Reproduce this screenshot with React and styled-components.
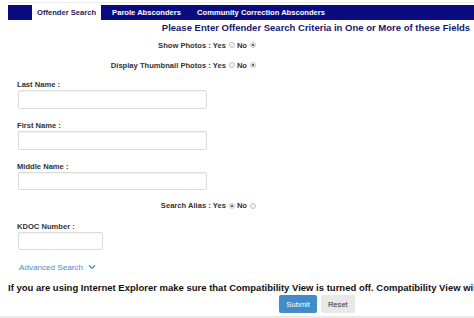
import React from 'react';
import styled, { createGlobalStyle } from 'styled-components';
import { FaChevronDown } from 'react-icons/fa';

const Global = createGlobalStyle`
  html, body {
    margin: 0;
    padding: 0;
    background: #fff;
    overflow: hidden;
  }
  body {
    font-family: "Liberation Sans", Arial, sans-serif;
    color: #333;
  }
`;

const Page = styled.div`
  width: 900px;
  padding-left: 8px;
`;

const TopRule = styled.div`
  margin-top: 2px;
  height: 1px;
  background: #ececec;
`;

const TabBar = styled.nav`
  margin-top: 2px;
  height: 15px;
  background: #0b0b80;
  display: flex;
  align-items: stretch;
  padding-left: 24px;
  gap: 6px;
`;

const Tab = styled.div`
  display: flex;
  align-items: center;
  padding: 0 5px;
  font-size: 7.6px;
  font-weight: bold;
  white-space: nowrap;
  background: ${p => (p.$active ? '#fff' : 'transparent')};
  color: ${p => (p.$active ? '#1c1c5a' : '#fff')};
`;

const Content = styled.div`
  width: 616px;
`;

const Heading = styled.h2`
  margin: 1px 0 0;
  height: 14px;
  line-height: 14px;
  font-size: 9.5px;
  font-weight: bold;
  color: #17176a;
  text-align: center;
`;

const RadioRow = styled.div`
  width: 250px;
  height: 12px;
  margin-top: ${p => p.$top || 0}px;
  display: flex;
  justify-content: flex-end;
  align-items: center;
  font-size: 7.6px;
  font-weight: bold;
  color: #333;
  white-space: nowrap;
`;

const Radio = styled.span`
  display: inline-block;
  box-sizing: border-box;
  width: 6px;
  height: 6px;
  margin: 0 2px 0 3px;
  border-radius: 50%;
  border: 1px solid #c4c4c4;
  background: ${p => (p.$checked ? 'radial-gradient(circle, #666 0 1.3px, #f2f2f2 1.6px)' : '#f2f2f2')};
`;

const Field = styled.div`
  padding-left: 9px;
  margin-top: ${p => p.$top || 0}px;
`;

const Label = styled.div`
  height: 11px;
  line-height: 11px;
  font-size: 7.6px;
  font-weight: bold;
  color: #333;
`;

const Input = styled.input`
  display: block;
  box-sizing: border-box;
  margin: 0 0 0 1px;
  width: ${p => p.$w}px;
  height: 18.5px;
  border: 1px solid #dcdcdc;
  border-radius: 2px;
  box-shadow: inset 0 1px 1px rgba(0, 0, 0, 0.05);
  background: #fff;
  outline: none;
`;

const Advanced = styled.div`
  margin-top: 11px;
  padding-left: 11px;
  height: 12px;
  display: flex;
  align-items: center;
  gap: 5px;
  font-size: 8.1px;
  color: #4c8bc6;

  svg {
    width: 8px;
    height: 8px;
  }
`;

const Notice = styled.div`
  margin-top: 8px;
  height: 14px;
  line-height: 14px;
  font-size: 9.5px;
  font-weight: bold;
  color: #111;
  white-space: nowrap;
`;

const Buttons = styled.div`
  display: flex;
  justify-content: center;
  gap: 4px;
  padding-left: 2px;
`;

const Button = styled.button`
  height: 18px;
  padding: 0 ${p => p.$pad}px;
  border: none;
  border-radius: 2px;
  font-family: "Liberation Sans", Arial, sans-serif;
  font-size: 7.6px;
  background: ${p => (p.$primary ? '#428bca' : '#e8e8e8')};
  color: ${p => (p.$primary ? '#fff' : '#333')};
`;

const Footer = styled.div`
  margin-top: 3px;
  margin-left: -8px;
  height: 2px;
  background: #e9e9e9;
`;

const YesNo = ({ label, yes, top }) => (
  <RadioRow $top={top}>
    {label} : Yes<Radio $checked={yes} />No<Radio $checked={!yes} />
  </RadioRow>
);

export default function App() {
  return (
    <Page>
      <Global />
      <TopRule />
      <TabBar>
        <Tab $active>Offender Search</Tab>
        <Tab>Parole Absconders</Tab>
        <Tab>Community Correction Absconders</Tab>
      </TabBar>
      <Content>
        <Heading>Please Enter Offender Search Criteria in One or More of these Fields</Heading>
        <YesNo label="Show Photos" top={4} yes={false} />
        <YesNo label="Display Thumbnail Photos" top={8} yes={false} />
        <Field $top={8}>
          <Label>Last Name :</Label>
          <Input $w={189} />
        </Field>
        <Field $top={11.5}>
          <Label>First Name :</Label>
          <Input $w={189} />
        </Field>
        <Field $top={11}>
          <Label>Middle Name :</Label>
          <Input $w={189} />
        </Field>
        <YesNo label="Search Alias" top={9.5} yes={true} />
        <Field $top={9}>
          <Label>KDOC Number :</Label>
          <Input $w={85} />
        </Field>
        <Advanced>
          Advanced Search <FaChevronDown />
        </Advanced>
        <Notice>
          If you are using Internet Explorer make sure that Compatibility View is turned off. Compatibility View will cause display problems.
        </Notice>
        <Buttons>
          <Button $primary $pad={7}>Submit</Button>
          <Button $pad={7}>Reset</Button>
        </Buttons>
      </Content>
      <Footer />
    </Page>
  );
}
